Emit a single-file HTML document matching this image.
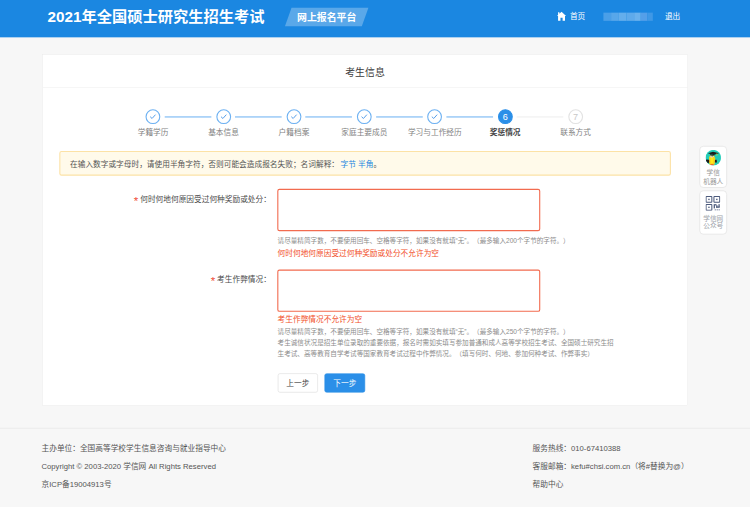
<!DOCTYPE html>
<html lang="zh-CN">
<head>
<meta charset="utf-8">
<title>考生信息 - 网上报名平台</title>
<style>
*{margin:0;padding:0;box-sizing:border-box;}
html,body{width:750px;height:507px;overflow:hidden;background:#f7f7f7;}
body{font-family:"Liberation Sans","Noto Sans CJK SC",sans-serif;text-spacing-trim:space-all;}
#wrap{position:absolute;left:0;top:0;width:1366px;height:924px;transform:scale(0.54905);transform-origin:0 0;background:#f7f7f7;color:#333;font-size:14px;}
.abs{position:absolute;white-space:nowrap;}
#hdr{position:absolute;left:0;top:0;width:1366px;height:68.3px;background:#1b87e1;}
#title{left:86.5px;top:1.1px;height:60px;line-height:60px;font-size:27.8px;font-weight:bold;color:#fff;}
#badge{left:525px;top:13.5px;width:140px;height:34px;background:rgba(255,255,255,.28);transform:skewX(-19.4deg);}
#badgetx{left:519px;top:15px;width:152px;height:34px;line-height:34px;text-align:center;font-size:18px;font-weight:bold;color:#fff;}
.nav{color:#fff;font-size:14px;height:20px;line-height:20px;top:20px;}
#blur{left:1099px;top:22.6px;width:90px;height:15px;display:flex;}
#blur i{display:block;height:15px;}
#card{position:absolute;left:77px;top:99px;width:1175.6px;height:640px;background:#fff;border:1px solid #ececec;}
#cardh{position:absolute;left:0;top:0;width:100%;height:60px;border-bottom:1.5px solid #eee;text-align:center;line-height:65.4px;font-size:18px;color:#3a3a3a;}
.sc{position:absolute;width:27px;height:27px;border-radius:50%;top:199.1px;border:2.2px solid #6db1f2;background:#fff;}
.sc svg{position:absolute;left:0;top:0;}
.sl{position:absolute;height:2.3px;top:211.5px;width:85px;background:#76b7f3;}
.slab{position:absolute;top:231.3px;height:20px;line-height:20px;width:128px;text-align:center;font-size:14px;color:#828282;white-space:nowrap;}
#alert{position:absolute;left:108px;top:275px;width:1114.2px;height:45px;background:#fffaea;border:2px solid #fce2a6;border-radius:4px;line-height:45px;padding-left:17.5px;font-size:14px;color:#555;white-space:nowrap;}
#alert span{color:#1a86e0;}#alert span:first-child{margin-left:-1.2px;}
.flab{position:absolute;right:872.6px;height:20px;line-height:20px;font-size:14px;color:#4a4a4a;white-space:nowrap;}
.flab b{color:#f04b37;font-weight:normal;margin-right:3.5px;font-family:"Liberation Sans",sans-serif;font-size:21px;line-height:0;position:relative;top:6px;}
.ta{position:absolute;left:504.6px;width:479.5px;height:76.5px;border:2px solid #f26b4f;border-radius:4px;background:#fff;}
.help{position:absolute;left:505.6px;font-size:12px;line-height:19.8px;color:#8c8c8c;white-space:nowrap;}
.err{position:absolute;left:505.6px;font-size:14px;line-height:20px;height:20px;color:#f2502a;white-space:nowrap;}
.btn{position:absolute;top:680.1px;height:35px;width:73.6px;line-height:34.6px;text-align:center;font-size:14px;border-radius:4px;white-space:nowrap;}
#b1{left:505.6px;background:#fff;border:1px solid #d9d9d9;color:#444;}
#b2{left:591.2px;background:#2b8fe8;border:1px solid #2b8fe8;color:#fff;}
#fline{position:absolute;left:0;top:778.8px;width:1366px;height:1.8px;background:#ececec;}
.ft{position:absolute;font-size:14px;line-height:32.4px;color:#555;white-space:nowrap;}
.wid{position:absolute;left:1274.2px;width:49.8px;background:#fff;border:1.8px solid #dbdbdb;border-radius:7px;text-align:center;font-size:12.5px;line-height:16.2px;color:#999;}
</style>
</head>
<body>
<div id="wrap">
  <div id="hdr"></div>
  <div id="title" class="abs">2021年全国硕士研究生招生考试</div>
  <div id="badge" class="abs"></div>
  <div id="badgetx" class="abs">网上报名平台</div>
  <svg class="abs" style="left:1013.8px;top:21.3px" width="17.5" height="17.5" viewBox="0 0 18 18"><path d="M9 0.5 L0.5 8.5 L2.5 8.5 L2.5 17.5 L7 17.5 L7 11.5 L11 11.5 L11 17.5 L15.5 17.5 L15.5 8.5 L17.5 8.5 Z M2.5 1.5 L5 1.5 L5 4 L2.5 6.3 Z" fill="#fff"/></svg>
  <div class="abs nav" style="left:1038px">首页</div>
  <div id="blur" class="abs"><i style="width:14px;background:#4a9fe8"></i><i style="width:14px;background:#58a7ea"></i><i style="width:14px;background:#64aeec"></i><i style="width:14px;background:#5eaaeb"></i><i style="width:12px;background:#6ab1ed"></i><i style="width:12px;background:#549fe9"></i><i style="width:10px;background:#3f98e6"></i></div>
  <div class="abs nav" style="left:1211px">退出</div>

  <div id="card"><div id="cardh">考生信息</div></div>

  <!-- steps -->
  <div id="steps">
    <div class="sc" style="left:265.4px"><svg width="22.6" height="22.6" viewBox="0 0 22 22"><path d="M6.3 11.2 L9.7 14.4 L15.8 7.6" fill="none" stroke="#4f9be9" stroke-width="1.7"/></svg></div>
    <div class="sl" style="left:299.9px;background:#76b7f3"></div>
    <div class="slab" style="left:214.9px">学籍学历</div>
    <div class="sc" style="left:393.6px"><svg width="22.6" height="22.6" viewBox="0 0 22 22"><path d="M6.3 11.2 L9.7 14.4 L15.8 7.6" fill="none" stroke="#4f9be9" stroke-width="1.7"/></svg></div>
    <div class="sl" style="left:428.1px;background:#76b7f3"></div>
    <div class="slab" style="left:343.1px">基本信息</div>
    <div class="sc" style="left:521.9px"><svg width="22.6" height="22.6" viewBox="0 0 22 22"><path d="M6.3 11.2 L9.7 14.4 L15.8 7.6" fill="none" stroke="#4f9be9" stroke-width="1.7"/></svg></div>
    <div class="sl" style="left:556.4px;background:#76b7f3"></div>
    <div class="slab" style="left:471.4px">户籍档案</div>
    <div class="sc" style="left:650.1px"><svg width="22.6" height="22.6" viewBox="0 0 22 22"><path d="M6.3 11.2 L9.7 14.4 L15.8 7.6" fill="none" stroke="#4f9be9" stroke-width="1.7"/></svg></div>
    <div class="sl" style="left:684.6px;background:#76b7f3"></div>
    <div class="slab" style="left:599.6px">家庭主要成员</div>
    <div class="sc" style="left:778.4px"><svg width="22.6" height="22.6" viewBox="0 0 22 22"><path d="M6.3 11.2 L9.7 14.4 L15.8 7.6" fill="none" stroke="#4f9be9" stroke-width="1.7"/></svg></div>
    <div class="sl" style="left:812.9px;background:#76b7f3"></div>
    <div class="slab" style="left:727.9px">学习与工作经历</div>
    <div class="sc" style="left:906.6px;background:#2b8fe8;border-color:#2b8fe8;color:#fff;text-align:center;line-height:22.6px;font-size:16.5px">6</div>
    <div class="sl" style="left:941.1px;background:#eeeeee"></div>
    <div class="slab" style="left:856.1px;color:#444;font-weight:bold">奖惩情况</div>
    <div class="sc" style="left:1034.9px;border-color:#e2e2e2;color:#c8c8c8;text-align:center;line-height:22.6px;font-size:16.5px">7</div>
    <div class="slab" style="left:984.4px">联系方式</div>
  </div>

  <div id="alert">在输入数字或字母时，请使用半角字符，否则可能会造成报名失败；名词解释： <span>字节</span> <span>半角</span>。</div>

  <div class="flab" style="top:352.8px"><b>*</b>何时何地何原因受过何种奖励或处分：</div>
  <div class="ta" style="top:344.2px"></div>
  <div class="help" style="top:429.6px">请尽量精简字数，不要使用回车、空格等字符，如果没有就填“无”。（最多输入200个字节的字符。）</div>
  <div class="err" style="top:451.4px">何时何地何原因受过何种奖励或处分不允许为空</div>

  <div class="flab" style="top:497.8px"><b>*</b>考生作弊情况：</div>
  <div class="ta" style="top:491.4px"></div>
  <div class="err" style="top:571px">考生作弊情况不允许为空</div>
  <div class="help" style="top:596px">请尽量精简字数，不要使用回车、空格等字符，如果没有就填“无”。（最多输入250个字节的字符。）<br>考生诚信状况是招生单位录取的重要依据，报名时需如实填写参加普通和成人高等学校招生考试、全国硕士研究生招<br>生考试、高等教育自学考试等国家教育考试过程中作弊情况。（填写何时、何地、参加何种考试、作弊事实）</div>

  <div id="b1" class="btn">上一步</div>
  <div id="b2" class="btn">下一步</div>

  <div id="fline"></div>
  <div class="ft" style="left:75.6px;top:801px">主办单位：全国高等学校学生信息咨询与就业指导中心<br>Copyright © 2003-2020 学信网 All Rights Reserved<br>京ICP备19004913号</div>
  <div class="ft" style="left:970px;top:801px">服务热线：010-67410388<br>客服邮箱：kefu#chsi.com.cn（将#替换为@）<br>帮助中心</div>

  <div class="wid" style="top:265.8px;height:76.6px">
    <svg style="position:absolute;left:9.8px;top:6.5px" width="28.4" height="28.4" viewBox="0 0 28 28"><defs><clipPath id="cc"><circle cx="14" cy="14" r="14"/></clipPath></defs><circle cx="14" cy="14" r="14" fill="#22cdb8"/><g clip-path="url(#cc)"><path d="M0 17.5 Q5 16.5 8.5 19 L8.5 23 L2 23.5 Z" fill="#1d1d1d"/><path d="M16 17.5 L20 17.5 L20.5 22.5 L16 22.5 Z" fill="#1d1d1d"/><path d="M7.2 11.5 Q7 9.6 11.5 9.6 Q16.2 9.6 16 11.5 Q18.5 16 16.8 20 Q17.5 24 15.5 27 L8 27 Q5.5 24 6.6 20 Q5 15 7.2 11.5 Z" fill="#f4d21f"/><path d="M9 15 Q11.5 13.5 14 15 L13.5 24 L9.5 24 Z" fill="#ffea17"/><ellipse cx="11.3" cy="12" rx="3.4" ry="1.7" fill="#f7f3e3"/><circle cx="9.9" cy="12.1" r="0.7" fill="#333"/><circle cx="12.7" cy="12.1" r="0.7" fill="#333"/><path d="M9 26 L14.5 26 L14.5 28 L9 28 Z" fill="#e8452f"/><path d="M4.2 6.2 L13.5 3.3 L24.2 6 L14 9 Z" fill="#1d1d1d"/><path d="M8.3 7.6 L8.3 9.8 Q12 11 16.2 9.6 L16.2 7.8 L13 9 Z" fill="#1d1d1d"/><path d="M20 6.2 Q21.5 8 20.2 10.5" stroke="#f4d21f" stroke-width="1.2" fill="none"/></g></svg>
    <div style="position:absolute;left:0;width:100%;top:37.8px;line-height:18px;font-size:12.2px;color:#999">学信<br>机器人</div>
  </div>
  <div class="wid" style="top:347px;height:80px">
    <svg style="position:absolute;left:10.2px;top:9.3px" width="26.8" height="26.8" viewBox="0 0 28 28" fill="none" stroke="#4c5a7c" stroke-width="2"><rect x="1" y="1" width="11" height="11" rx="1"/><rect x="16" y="1" width="11" height="11" rx="1"/><rect x="1" y="16" width="11" height="11" rx="1"/><g fill="#4c5a7c" stroke="none"><rect x="5.2" y="5.2" width="2.6" height="2.6"/><rect x="20.2" y="5.2" width="2.6" height="2.6"/><rect x="5.2" y="20.2" width="2.6" height="2.6"/><rect x="15.5" y="15.5" width="2.4" height="8"/><rect x="17.9" y="15.5" width="3" height="2.4"/><rect x="20.3" y="17.5" width="2.4" height="4.8"/><rect x="20.3" y="20" width="6.5" height="2.3"/><rect x="24.6" y="15.5" width="2.4" height="6"/><rect x="17.5" y="25.4" width="2" height="2"/><rect x="21.2" y="25.4" width="2" height="2"/><rect x="24.9" y="25.4" width="2" height="2"/></g></svg>
    <div style="position:absolute;left:0;width:100%;top:42.8px;line-height:14.4px;font-size:12.2px;color:#9c9fa9">学信网<br>公众号</div>
  </div>
</div>
</body>
</html>
